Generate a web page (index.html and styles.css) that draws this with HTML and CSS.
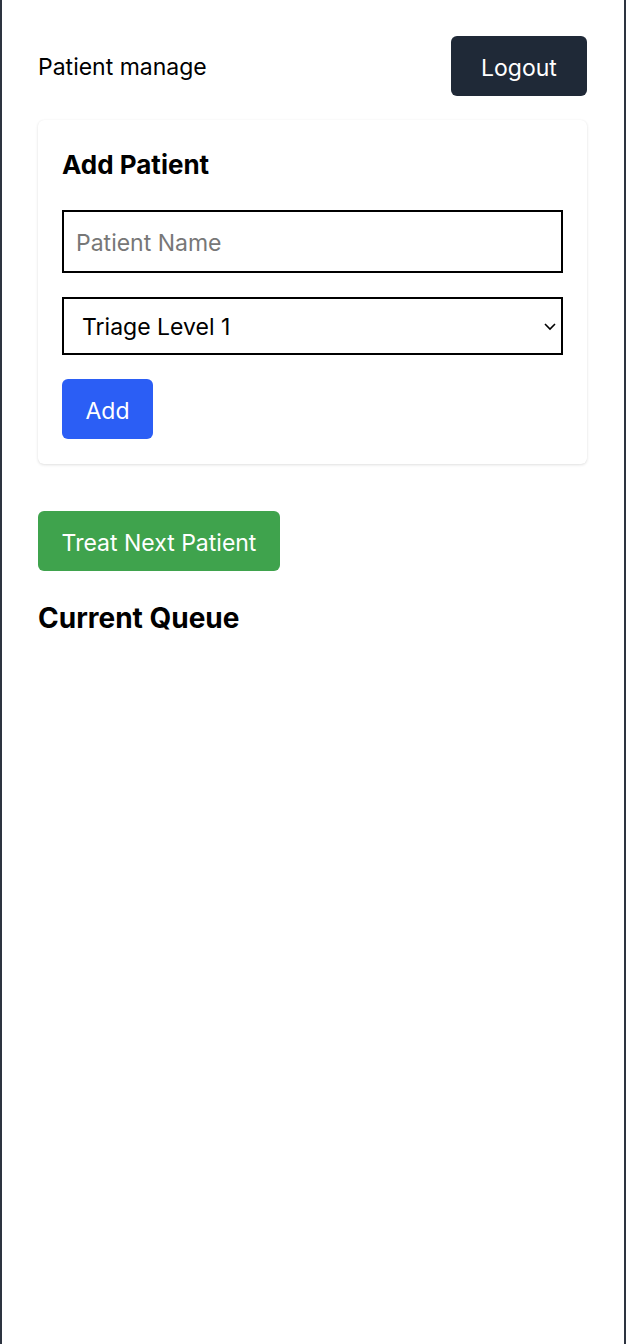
FILE: index.html
```html
<!DOCTYPE html>
<html lang="en">
<head>
<meta charset="utf-8">
<title>Patient manage</title>
<link rel="stylesheet" href="styles.css">
</head>
<body>
<main class="page">
  <header class="topbar">
    <span class="brand">Patient manage</span>
    <button class="btn btn-dark">Logout</button>
  </header>
  <section class="card">
    <h2 class="card-title">Add Patient</h2>
    <input class="field" type="text" placeholder="Patient Name">
    <div class="select-wrap">
      <select class="field select">
        <option>Triage Level 1</option>
        <option>Triage Level 2</option>
        <option>Triage Level 3</option>
      </select>
      <svg class="chev" width="14" height="10" viewBox="0 0 14 10"><path d="M2 3 L7 8 L12 3" fill="none" stroke="#000" stroke-width="1.6"/></svg>
    </div>
    <div><button class="btn btn-blue">Add</button></div>
  </section>
  <div class="actions"><button class="btn btn-green">Treat Next Patient</button></div>
  <h2 class="queue-title">Current Queue</h2>
</main>
</body>
</html>
```
FILE: styles.css
```css
html, body {
  margin: 0;
  padding: 0;
  height: 100%;
}
body {
  background: #2d3440;
  font-family: Inter, "Noto Sans", "Liberation Sans", sans-serif;
  color: #000;
}
.page {
  background: #fff;
  margin: 0 2px;
  min-height: 100%;
  padding: 36px 37px 36px 36px;
  box-sizing: border-box;
}
.topbar {
  display: flex;
  justify-content: space-between;
  align-items: center;
  margin-bottom: 24px;
}
.brand {
  font-size: 23px;
  padding-top: 2px;
}
.btn {
  border: none;
  border-radius: 6px;
  color: #fff;
  font-family: inherit;
  font-size: 23px;
  height: 60px;
  padding: 3px 24px 0;
  cursor: pointer;
}
.btn-dark { background: #1f2937; width: 136px; }
.btn-blue { background: #2b5ef5; width: 91px; padding: 3px 0 0; }
.btn-green { background: #3fa34d; width: 242px; padding: 3px 0 0; }
.card {
  background: #fff;
  border-radius: 6px;
  box-shadow: 0 1px 3px rgba(0,0,0,0.12), 0 0 1px rgba(0,0,0,0.06);
  padding: 24px 24px 25px;
  display: flex;
  flex-direction: column;
  gap: 24px;
}
.card-title {
  margin: 5px 0 5px;
  font-size: 26px;
  font-weight: 700;
  line-height: 32px;
}
.field {
  box-sizing: border-box;
  width: 100%;
  border: 2px solid #000;
  font-family: inherit;
  font-size: 23px;
  height: 63px;
  padding: 2px 12px 0;
  background: #fff;
  border-radius: 0;
  color: #000;
}
.field::placeholder { color: #777; }
.select-wrap { position: relative; }
.select {
  appearance: none;
  -webkit-appearance: none;
  height: 58px;
  padding: 2px 18px 0;
}
.chev {
  position: absolute;
  right: 6px;
  top: 24px;
  pointer-events: none;
}
.actions { margin-top: 47px; }
.queue-title {
  margin: 30px 0 0;
  font-size: 28px;
  font-weight: 700;
}
```
